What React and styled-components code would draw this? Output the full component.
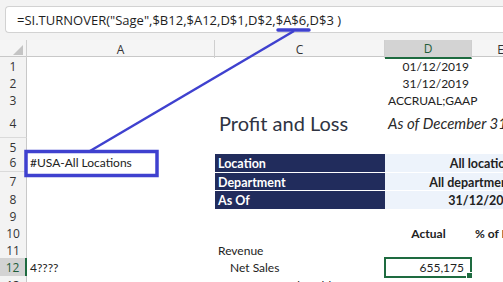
import React from "react";
import styled, { createGlobalStyle, css } from "styled-components";

const GlobalStyle = createGlobalStyle`
  html, body { margin: 0; padding: 0; background: #ffffff; overflow: hidden; }
  body { font-family: "Open Sans", "Liberation Sans", sans-serif; }
`;

const COLS = "27px 188px 170px 87px 58px 1fr";
const ANNOT = "#3f41cf";

const Page = styled.div`
  position: relative;
  width: 503px;
  height: 282px;
  overflow: hidden;
`;

const FormulaArea = styled.div`
  height: 40px;
  box-sizing: border-box;
  background: #f3f3f3;
  padding: 6px 0 0 5px;
  position: relative;
`;

const FormulaBox = styled.div`
  height: 27px;
  box-sizing: border-box;
  background: #ffffff;
  border: 1px solid #d2d2d2;
  border-right: none;
  border-radius: 4px 0 0 4px;
  display: flex;
  align-items: center;
  padding-left: 11px;
  font-family: "Open Sans", "Liberation Sans", sans-serif;
  font-size: 13px;
  color: #1e1e1e;
  white-space: pre;
`;

const Sheet = styled.div`
  width: 560px;
  display: flex;
  flex-direction: column;
`;

const Row = styled.div`
  display: grid;
  grid-template-columns: ${COLS};
  height: ${(p) => p.$h}px;
`;

const HeaderRow = styled(Row)`
  background: #f5f5f5;
  border-bottom: 1px solid #c8c8c8;
  box-sizing: border-box;
`;

const ColHead = styled.div`
  display: flex;
  align-items: center;
  justify-content: center;
  font-family: "Open Sans", "Liberation Sans", sans-serif;
  font-size: 12px;
  color: #333;
  border-right: 1px solid #cfcfcf;
  box-sizing: border-box;
  ${(p) =>
    p.$selected &&
    css`
      background: #d3d3d3;
      color: #1f5d3a;
      border-bottom: 2px solid #1e6b40;
      margin-bottom: -1px;
    `}
`;

const Corner = styled.div`
  position: relative;
  border-right: 1px solid #cfcfcf;
  display: flex;
  align-items: flex-end;
  justify-content: flex-end;
  padding: 0 3px 3px 0;
  box-sizing: border-box;
`;

const CornerTriangle = styled.div`
  width: 0;
  height: 0;
  border-left: 10px solid transparent;
  border-bottom: 10px solid #c4c4c4;
`;

const RowHead = styled.div`
  background: ${(p) => (p.$selected ? "#d3d3d3" : "#f3f3f3")};
  border-bottom: 1px solid #dadada;
  border-right: ${(p) => (p.$selected ? "2px solid #1e6b40" : "1px solid #c8c8c8")};
  box-sizing: border-box;
  display: flex;
  align-items: center;
  justify-content: center;
  font-family: "Open Sans", "Liberation Sans", sans-serif;
  font-size: 12px;
  color: ${(p) => (p.$selected ? "#1f5d3a" : "#333")};
  padding-top: 1px;
`;

const Cell = styled.div`
  position: relative;
  display: flex;
  align-items: center;
  justify-content: ${(p) =>
    p.$align === "right" ? "flex-end" : p.$align === "center" ? "center" : "flex-start"};
  padding: 0 ${(p) => p.$pr ?? 3}px 0 ${(p) => p.$pl ?? 3}px;
  box-sizing: border-box;
  white-space: nowrap;
  overflow: visible;
  min-width: 0;
  font-family: "Lato", "Noto Sans", sans-serif;
  font-size: 12px;
  color: #222;
  font-weight: ${(p) => (p.$bold ? 700 : 400)};
  grid-column: ${(p) => p.$span || "auto"};
`;

const Title = styled(Cell)`
  font-size: 20px;
  font-weight: 400;
  color: #2f3442;
  padding-left: 4px;
`;

const Subtitle = styled(Cell)`
  font-size: 15px;
  font-style: italic;
  color: #2a2a2a;
`;

const NavyCell = styled(Cell)`
  background: #212c5c;
  color: #ffffff;
  font-weight: 700;
  font-size: 12.5px;
  border-top: 1px solid #ffffff;
`;

const PaleCell = styled(Cell)`
  background: #edf3fb;
  font-weight: 700;
  font-size: 12.5px;
  color: #222;
  border-top: 1px solid #ffffff;
  padding-right: 12px;
`;

const Selection = styled.div`
  position: absolute;
  inset: -1px 0 -1px -1px;
  border: 2px solid #1e6b40;
  pointer-events: none;
`;

const FillHandle = styled.div`
  position: absolute;
  right: -3px;
  bottom: -3px;
  width: 5px;
  height: 5px;
  background: #1e6b40;
  border: 1px solid #ffffff;
`;

const Overlay = styled.svg`
  position: absolute;
  left: 0;
  top: 0;
  pointer-events: none;
`;

const rows = [
  { n: 1, h: 17 },
  { n: 2, h: 17 },
  { n: 3, h: 17 },
  { n: 4, h: 30 },
  { n: 5, h: 15 },
  { n: 6, h: 19 },
  { n: 7, h: 18 },
  { n: 8, h: 17 },
  { n: 9, h: 17 },
  { n: 10, h: 17 },
  { n: 11, h: 17 },
  { n: 12, h: 18 },
  { n: 13, h: 17 },
];

function renderCells(n) {
  switch (n) {
    case 1:
      return (
        <>
          <Cell />
          <Cell />
          <Cell $align="right">01/12/2019</Cell>
        </>
      );
    case 2:
      return (
        <>
          <Cell />
          <Cell />
          <Cell $align="right">31/12/2019</Cell>
        </>
      );
    case 3:
      return (
        <>
          <Cell />
          <Cell />
          <Cell>ACCRUAL;GAAP</Cell>
        </>
      );
    case 4:
      return (
        <>
          <Cell />
          <Title>Profit and Loss</Title>
          <Subtitle>As of December 31, 2019</Subtitle>
        </>
      );
    case 6:
      return (
        <>
          <Cell>#USA-All Locations</Cell>
          <NavyCell>Location</NavyCell>
          <PaleCell $span="4 / span 2" $align="right">All locations</PaleCell>
        </>
      );
    case 7:
      return (
        <>
          <Cell />
          <NavyCell>Department</NavyCell>
          <PaleCell $span="4 / span 2" $align="right">All departments</PaleCell>
        </>
      );
    case 8:
      return (
        <>
          <Cell />
          <NavyCell>As Of</NavyCell>
          <PaleCell $span="4 / span 2" $align="right">31/12/2019</PaleCell>
        </>
      );
    case 10:
      return (
        <>
          <Cell />
          <Cell />
          <Cell $align="center" $bold>Actual</Cell>
          <Cell $bold>% of Revenue</Cell>
        </>
      );
    case 11:
      return (
        <>
          <Cell />
          <Cell>Revenue</Cell>
        </>
      );
    case 12:
      return (
        <>
          <Cell>4????</Cell>
          <Cell $pl={15}>Net Sales</Cell>
          <Cell $align="right" $pr={8}>
            655,175
            <Selection>
              <FillHandle />
            </Selection>
          </Cell>
        </>
      );
    case 13:
      return (
        <>
          <Cell>50000-59999</Cell>
          <Cell $pl={15}>Cost of Goods Sold</Cell>
          <Cell $align="right" $pr={8}>37,000</Cell>
          <Cell $align="right">1%</Cell>
        </>
      );
    default:
      return null;
  }
}

export default function App() {
  return (
    <Page>
      <GlobalStyle />
      <FormulaArea>
        <FormulaBox>{'=SI.TURNOVER("Sage",$B12,$A12,D$1,D$2,$A$6,D$3 )'}</FormulaBox>
      </FormulaArea>
      <Sheet>
        <HeaderRow $h={17}>
          <Corner>
            <CornerTriangle />
          </Corner>
          <ColHead>A</ColHead>
          <ColHead>C</ColHead>
          <ColHead $selected>D</ColHead>
          <ColHead>E</ColHead>
          <ColHead />
        </HeaderRow>
        {rows.map((r) => (
          <Row key={r.n} $h={r.h}>
            <RowHead $selected={r.n === 12}>{r.n}</RowHead>
            {renderCells(r.n)}
          </Row>
        ))}
      </Sheet>
      <Overlay width="503" height="282" viewBox="0 0 503 282">
        <line x1="278" y1="30" x2="309" y2="30" stroke={ANNOT} strokeWidth="3.5" strokeLinecap="round" />
        <line x1="294" y1="31" x2="90" y2="151" stroke={ANNOT} strokeWidth="2.5" />
        <rect x="26" y="151.5" width="131" height="24" fill="none" stroke={ANNOT} strokeWidth="3.5" />
      </Overlay>
    </Page>
  );
}
